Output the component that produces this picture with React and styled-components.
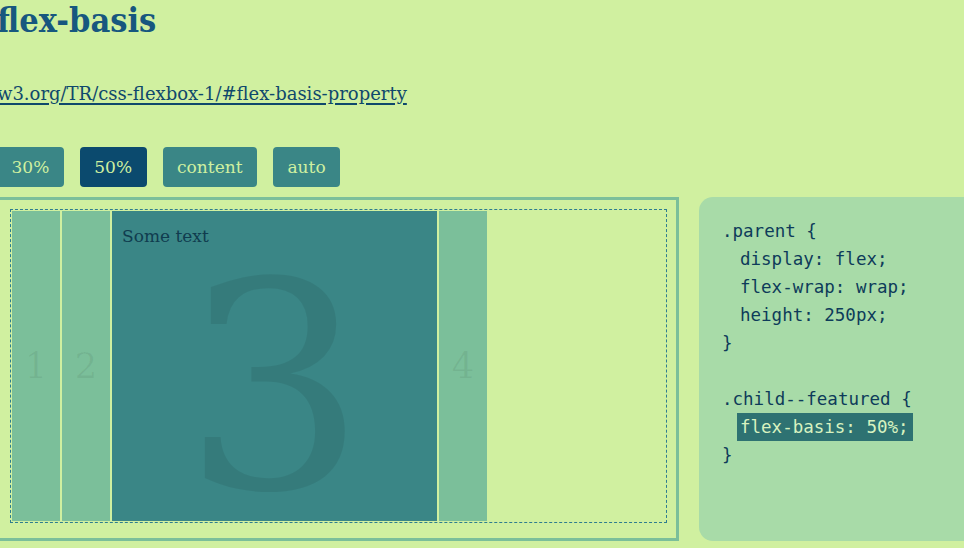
import React from "react";
import styled, { createGlobalStyle } from "styled-components";

const GlobalStyle = createGlobalStyle`
  html, body {
    margin: 0;
    padding: 0;
    overflow: hidden;
    background: #d0f0a0;
  }
`;

const Page = styled.div`
  margin-left: -3px;
  font-family: "DejaVu Serif", Georgia, serif;
  font-size: 17px;
  color: #103c4f;
`;

const Title = styled.h1`
  margin: 0;
  font-family: "DejaVu Serif Condensed", "DejaVu Serif", Georgia, serif;
  font-size: 34px;
  line-height: 40px;
  font-weight: bold;
  color: #17577f;
`;

const SpecLink = styled.a`
  display: block;
  margin-top: 42px;
  font-size: 18px;
  line-height: 24px;
  color: #0f486c;
  text-decoration: underline;
  text-decoration-thickness: 2px;
  text-underline-offset: 3px;
`;

const Toolbar = styled.div`
  display: flex;
  gap: 16px;
  margin-top: 41px;
`;

const Button = styled.button`
  height: 40px;
  padding: 0 14.5px;
  border: none;
  border-radius: 4px;
  font-family: inherit;
  font-size: 17px;
  color: #d0f0a0;
  background: ${({ $active }) => ($active ? "#0b4a6e" : "#3a8686")};
  cursor: pointer;
`;

const Row = styled.div`
  display: flex;
  gap: 20px;
  height: 344px;
  margin-top: 10px;
`;

const Demo = styled.div`
  box-sizing: border-box;
  flex: 0 0 682px;
  border: 3px solid #7bbf9a;
  padding: 9px 9px 9px 10px;
`;

const Parent = styled.div`
  box-sizing: border-box;
  display: flex;
  flex-wrap: wrap;
  height: 314px;
  border: 1px dashed #2e7d8f;
`;

const Child = styled.div`
  display: grid;
  flex: 0 0 ${({ $basis }) => $basis};
  height: 310px;
  margin: 1px;
  overflow: hidden;
  background: ${({ $featured }) => ($featured ? "#3a8686" : "#7bbf9a")};
`;

const Digit = styled.span`
  grid-area: 1 / 1;
  place-self: center;
  font-size: ${({ $big }) => ($big ? "288px" : "36px")};
  margin-top: ${({ $big }) => ($big ? "34px" : "0")};
  line-height: 1;
  color: rgba(0, 0, 0, ${({ $big }) => ($big ? 0.08 : 0.06)});
  user-select: none;
`;

const ChildText = styled.p`
  grid-area: 1 / 1;
  align-self: start;
  margin: 0;
  padding: 15px 10px;
  font-size: 17px;
  color: #103c4f;
  position: relative;
`;

const Code = styled.pre`
  box-sizing: border-box;
  flex: 0 0 300px;
  margin: 0;
  padding: 20px 23px;
  border-radius: 14px;
  background: #a8dba8;
  font-family: "DejaVu Sans Mono", Consolas, monospace;
  font-size: 17.5px;
  line-height: 28px;
  color: #0e3b5a;
`;

const Line = styled.div`
  height: 28px;
  padding-left: ${({ $indent }) => ($indent ? "18px" : "0")};
`;

const Highlight = styled.span`
  display: inline-block;
  margin-left: -3px;
  padding: 0 4px 0 3px;
  background: #2e7272;
  color: #d8f2c0;
`;

const children = [
  { n: "1", basis: "48px" },
  { n: "2", basis: "48px" },
  { n: "3", basis: "325px", featured: true, text: "Some text" },
  { n: "4", basis: "48px" },
];

const options = ["30%", "50%", "content", "auto"];

export default function App() {
  return (
    <>
      <GlobalStyle />
      <Page>
        <Title>flex-basis</Title>
        <SpecLink href="#">w3.org/TR/css-flexbox-1/#flex-basis-property</SpecLink>

        <Toolbar>
          {options.map((o) => (
            <Button key={o} $active={o === "50%"}>
              {o}
            </Button>
          ))}
        </Toolbar>

        <Row>
          <Demo>
            <Parent>
              {children.map((c) => (
                <Child key={c.n} $basis={c.basis} $featured={c.featured}>
                  <Digit $big={c.featured}>{c.n}</Digit>
                  {c.text && <ChildText>{c.text}</ChildText>}
                </Child>
              ))}
            </Parent>
          </Demo>

          <Code>
            <Line>.parent {"{"}</Line>
            <Line $indent>display: flex;</Line>
            <Line $indent>flex-wrap: wrap;</Line>
            <Line $indent>height: 250px;</Line>
            <Line>{"}"}</Line>
            <Line />
            <Line>.child--featured {"{"}</Line>
            <Line $indent>
              <Highlight>flex-basis: 50%;</Highlight>
            </Line>
            <Line>{"}"}</Line>
          </Code>
        </Row>
      </Page>
    </>
  );
}
